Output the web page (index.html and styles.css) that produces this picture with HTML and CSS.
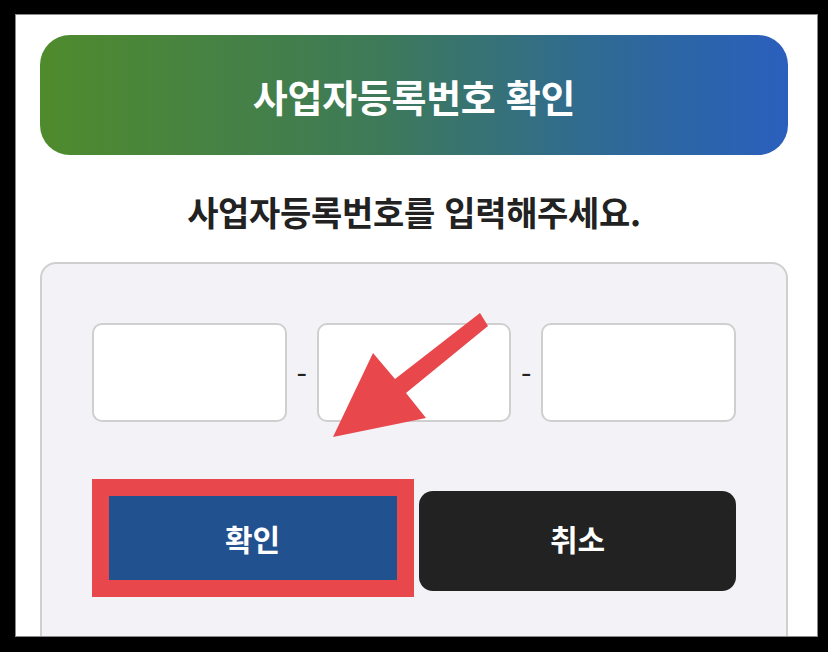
FILE: index.html
```html
<!DOCTYPE html>
<html lang="ko">
<head>
  <meta charset="UTF-8">
  <meta name="viewport" content="width=device-width, initial-scale=1.0">
  <title>사업자등록번호 확인</title>
  <link rel="stylesheet" href="styles.css">
</head>
<body>
  <div class="frame">
    <div class="header">
      <h1>사업자등록번호 확인</h1>
    </div>

    <p class="subtitle">사업자등록번호를 입력해주세요.</p>

    <div class="panel">
      <div class="biz-number">
        <input type="text" class="num-input" maxlength="3">
        <span class="dash">-</span>
        <input type="text" class="num-input" maxlength="2">
        <span class="dash">-</span>
        <input type="text" class="num-input" maxlength="5">
      </div>

      <div class="action-buttons">
        <button class="confirm-btn">확인</button>
        <button class="cancel-btn">취소</button>
      </div>
    </div>
  </div>

  <!-- annotation overlay -->
  <div class="highlight-box"></div>
  <svg class="pointer-arrow" width="828" height="652" viewBox="0 0 828 652">
    <polygon points="480,313 488,326 406,393 426,418 333,437 373,353 395,379" fill="#e8474c"/>
  </svg>
</body>
</html>
```

FILE: styles.css
```css
* {
  box-sizing: border-box;
  margin: 0;
  padding: 0;
}

body {
  font-family: "Noto Sans CJK KR", "Noto Sans", sans-serif;
  background-color: #000;
  width: 828px;
  height: 652px;
  overflow: hidden;
}

.frame {
  margin: 14px 0 0 15px;
  width: 803px;
  height: 623px;
  background: #fff;
  border: 1px solid #8a8a8a;
  padding: 20px 29px 0 24px;
  overflow: hidden;
}

.header {
  height: 120px;
  border-radius: 30px;
  background: linear-gradient(90deg, #4f8b2c 0%, #3e7a58 45%, #2f6a95 75%, #2a5fbd 100%);
  display: flex;
  align-items: center;
  justify-content: center;
}

h1 {
  font-size: 38px;
  font-weight: 700;
  color: #fff;
  letter-spacing: -0.3px;
}

.subtitle {
  margin: 36px 0 30px;
  height: 41px;
  line-height: 41px;
  text-align: center;
  font-size: 34px;
  font-weight: 700;
  color: #222;
  letter-spacing: -0.3px;
}

.panel {
  border: 2px solid #cfcfcf;
  border-radius: 16px;
  background-color: #f2f2f7;
  padding: 59px 50px 60px;
}

.biz-number {
  display: grid;
  grid-template-columns: 1fr 30px 1fr 30px 1fr;
  align-items: center;
}

.num-input {
  width: 100%;
  height: 99px;
  border: 2px solid #cfcfcf;
  border-radius: 10px;
  background: #fff;
  font-size: 24px;
  padding: 0 16px;
}

.num-input:focus {
  outline: none;
}

.dash {
  text-align: center;
  font-size: 30px;
  color: #222;
  line-height: 1;
}

.action-buttons {
  display: grid;
  grid-template-columns: 321px 317px;
  gap: 6px;
  margin-top: 69px;
}

button {
  height: 100px;
  padding-bottom: 6px;
  border: none;
  border-radius: 14px;
  font-family: inherit;
  font-size: 30px;
  font-weight: 700;
  color: #fff;
  cursor: pointer;
}

.confirm-btn {
  background-color: #22518f;
}

.cancel-btn {
  background-color: #222;
}

.highlight-box {
  position: absolute;
  left: 92px;
  top: 479px;
  width: 322px;
  height: 118px;
  border: 17px solid #e8474c;
}

.pointer-arrow {
  position: absolute;
  left: 0;
  top: 0;
  pointer-events: none;
}
```
